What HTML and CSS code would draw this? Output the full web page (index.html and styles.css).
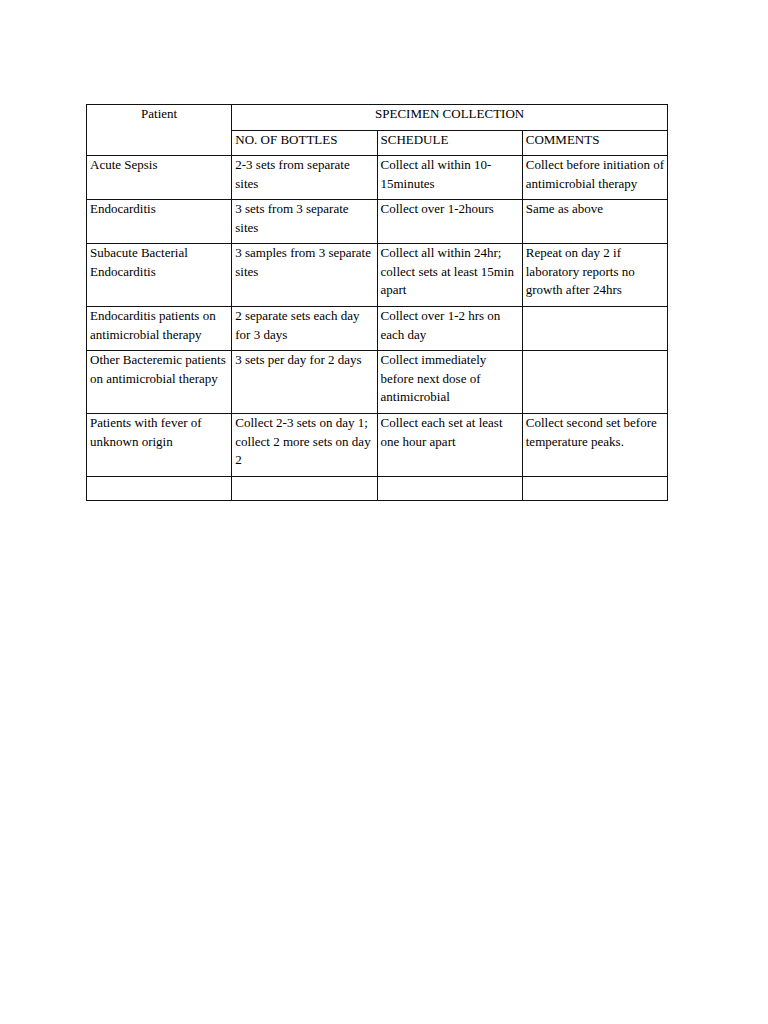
FILE: index.html
```html
<!DOCTYPE html>
<html>
<head>
<meta charset="utf-8">
<link rel="stylesheet" href="styles.css">
</head>
<body>
<div class="page">
<table class="spec">
<colgroup><col class="c"><col class="c"><col class="c"><col class="c"></colgroup>
<tr class="r1"><td rowspan="2" class="center">Patient</td><td colspan="3" class="center">SPECIMEN COLLECTION</td></tr>
<tr class="r1"><td>NO. OF BOTTLES</td><td>SCHEDULE</td><td>COMMENTS</td></tr>
<tr class="r2"><td>Acute Sepsis</td><td>2-3 sets from separate sites</td><td>Collect all within 10-15minutes</td><td>Collect before initiation of antimicrobial therapy</td></tr>
<tr class="r2"><td>Endocarditis</td><td>3 sets from 3 separate sites</td><td>Collect over 1-2hours</td><td>Same as above</td></tr>
<tr class="r3"><td>Subacute Bacterial Endocarditis</td><td>3 samples from 3 separate sites</td><td>Collect all within 24hr; collect sets at least 15min apart</td><td>Repeat on day 2 if laboratory reports no growth after 24hrs</td></tr>
<tr class="r2"><td>Endocarditis patients on antimicrobial therapy</td><td>2 separate sets each day for 3 days</td><td>Collect over 1-2 hrs on each day</td><td></td></tr>
<tr class="r3"><td>Other Bacteremic patients on antimicrobial therapy</td><td>3 sets per day for 2 days</td><td>Collect immediately before next dose of antimicrobial</td><td></td></tr>
<tr class="r3b"><td>Patients with fever of unknown origin</td><td>Collect 2-3 sets on day 1; collect 2 more sets on day 2</td><td>Collect each set at least one hour apart</td><td>Collect second set before temperature peaks.</td></tr>
<tr class="r0"><td></td><td></td><td></td><td></td></tr>
</table>
</div>
</body>
</html>
```

FILE: styles.css
```css
html, body {
  margin: 0;
  padding: 0;
  background: #fff;
}
.page {
  padding: 104px 0 0 86px;
}
.spec {
  border-collapse: collapse;
  table-layout: fixed;
  width: 581px;
  font-family: "Liberation Serif", "Times New Roman", serif;
  font-size: 13px;
  line-height: 18.5px;
  color: #000;
}
.spec .c {
  width: 145.25px;
}
.spec td {
  border: 1px solid #111;
  padding: 0 3px 6px 3px;
  vertical-align: top;
  text-align: left;
}
.spec td.center {
  text-align: center;
}
.r1 { height: 25px; }
.r2 { height: 44px; }
.r3 { height: 63px; }
.r3b { height: 62px; }
.r0 { height: 24px; }
```
